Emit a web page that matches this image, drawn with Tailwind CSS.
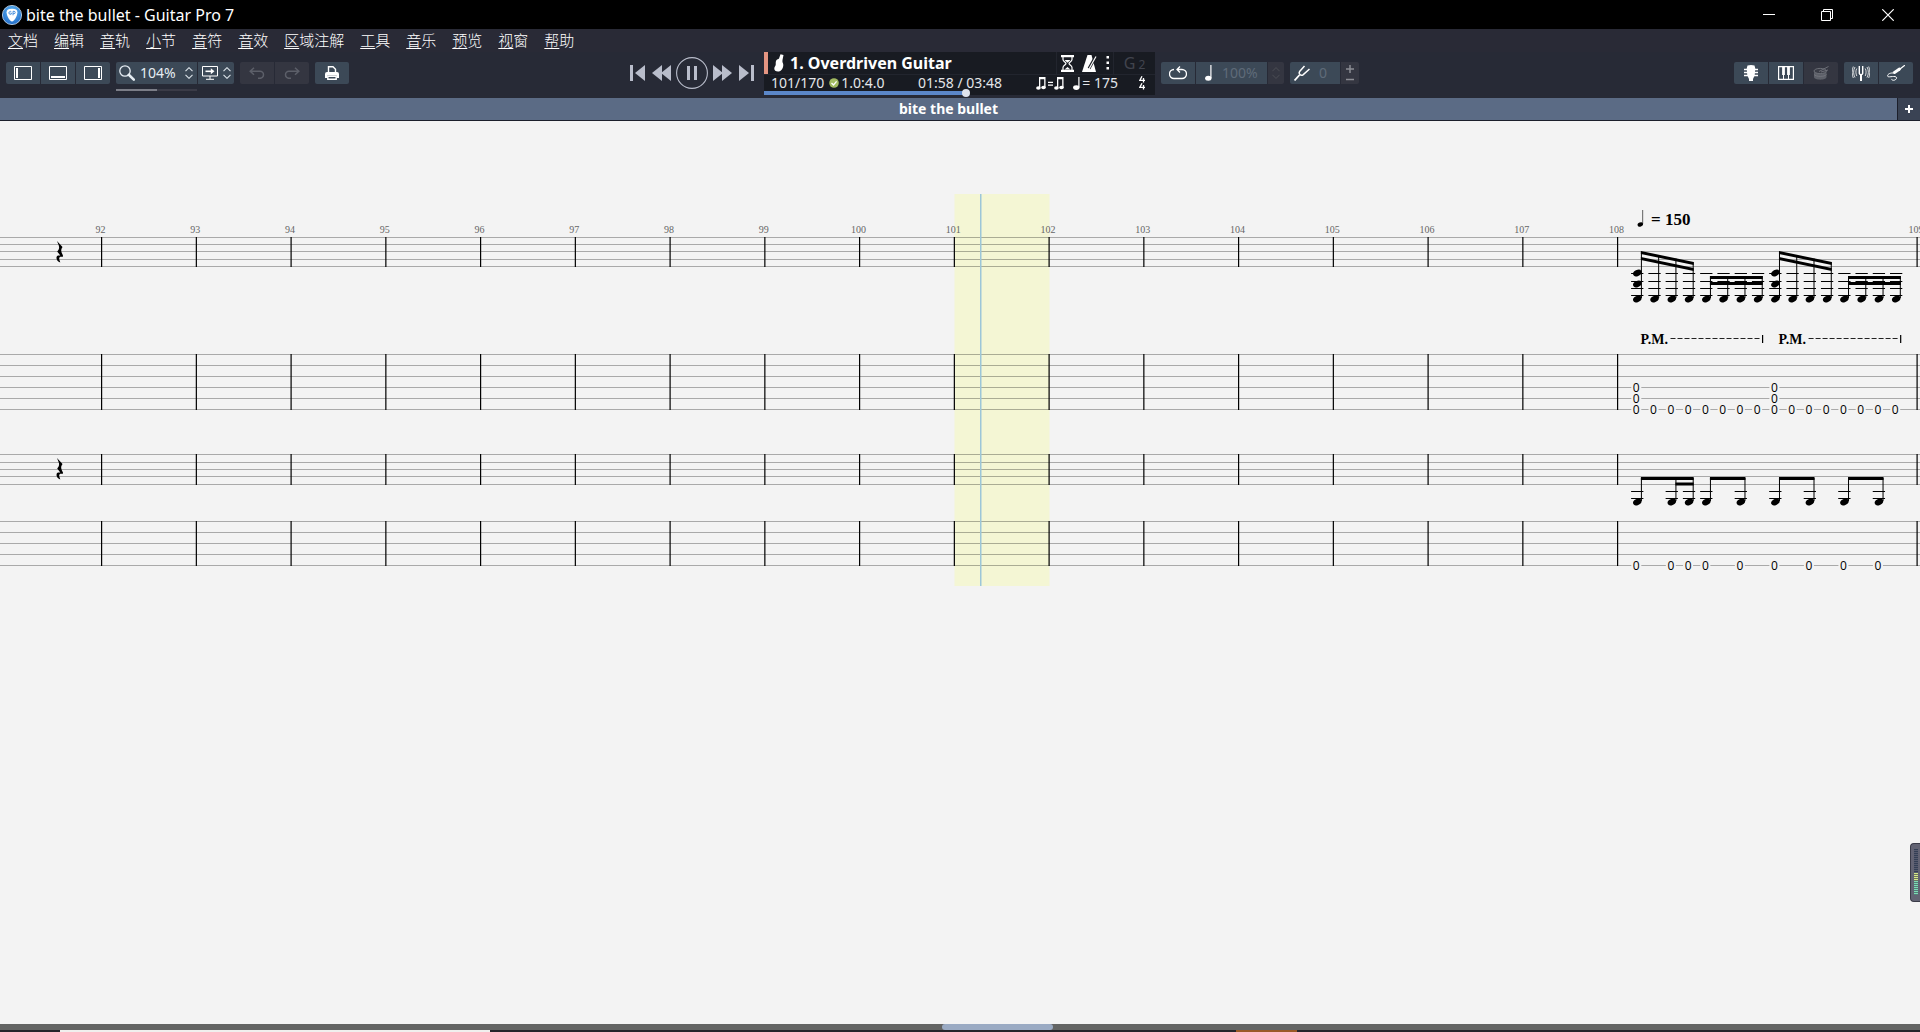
<!DOCTYPE html>
<html lang="zh-CN">
<head>
<meta charset="utf-8">
<title>bite the bullet - Guitar Pro 7</title>
<script src="https://cdn.jsdelivr.net/npm/@tailwindcss/browser@4"></script>
</head>
<body class="flex h-screen flex-col overflow-hidden bg-[#f3f3f3] font-['Noto_Sans','Noto_Sans_CJK_SC',sans-serif] text-white">

<!-- Window title -->
<header class="flex h-[29px] shrink-0 items-center bg-black pl-[2px]">
  <svg class="h-5 w-5" viewBox="0 0 20 20"><defs><radialGradient id="lg" cx=".5" cy=".3" r=".8"><stop offset="0" stop-color="#5cb4f2"/><stop offset="1" stop-color="#1a63c4"/></radialGradient></defs><circle cx="10" cy="10" r="9.6" fill="url(#lg)" stroke="#cfe4f7" stroke-width=".8"/><path d="M10 3.8c3.4 0 5.4 1 5.4 3.4 0 3.400-3.300 9.300-5.400 9.300S4.600 10.600 4.600 7.200C4.600 4.800 6.600 3.800 10 3.800z" fill="#fff"/><path d="M9.300 6.700a1.500 1.500 0 1 0 0 2.400V8H8.400M11 10.300V6.300h1a1.200 1.200 0 0 1 0 2.400h-1" fill="none" stroke="#3a87d8" stroke-width=".9"/></svg>
  <h1 class="ml-1 text-base leading-5">bite the bullet - Guitar Pro 7</h1>
  <div class="ml-auto flex h-full">
    <button aria-label="Minimize" class="flex w-[58px] items-center justify-center"><svg class="h-3 w-3" viewBox="0 0 12 12"><path d="M0 5.500h12" stroke="#fff"/></svg></button>
    <button aria-label="Restore" class="flex w-[58px] items-center justify-center"><svg class="h-3 w-3" viewBox="0 0 12 12" fill="none" stroke="#fff"><path d="M.5 2.500h9v9h-9zM2.500 2.500v-2h9v9h-2"/></svg></button>
    <button aria-label="Close" class="flex w-[64px] items-center justify-center"><svg class="h-3 w-3" viewBox="0 0 12 12"><path d="M.3.3l11.400 11.400M11.700.3L.3 11.700" stroke="#fff" stroke-width="1.200"/></svg></button>
  </div>
</header>

<!-- Menu bar -->
<nav class="flex h-[23px] shrink-0 items-center gap-4 bg-[#292a36] pb-[2px] pl-2 text-[15px] leading-5 font-light">
  <button><u class="underline-offset-2">文</u>档</button>
  <button><u class="underline-offset-2">编</u>辑</button>
  <button><u class="underline-offset-2">音</u>轨</button>
  <button><u class="underline-offset-2">小</u>节</button>
  <button><u class="underline-offset-2">音</u>符</button>
  <button><u class="underline-offset-2">音</u>效</button>
  <button><u class="underline-offset-2">区</u>域注解</button>
  <button><u class="underline-offset-2">工</u>具</button>
  <button><u class="underline-offset-2">音</u>乐</button>
  <button><u class="underline-offset-2">预</u>览</button>
  <button><u class="underline-offset-2">视</u>窗</button>
  <button><u class="underline-offset-2">帮</u>助</button>
</nav>

<!-- Toolbar -->
<div class="grid h-[46px] shrink-0 grid-cols-[1fr_auto_1fr] bg-[#272a36] pr-[7px] pl-[6px]">
  <div class="flex items-center justify-between pr-[10px] pb-1">
    <div class="flex gap-[6px]">
      <div class="flex gap-px overflow-hidden rounded-xs">
        <button aria-label="Left panel" class="flex h-[22px] w-[34px] items-center justify-center bg-[#3c4957]"><svg class="h-[14px] w-[18px]" viewBox="0 0 18 14" fill="none" stroke="#fff"><path d="M.5.5h17v13H.5z"/><path d="M3 2v10" stroke-width="2"/></svg></button>
        <button aria-label="Bottom panel" class="flex h-[22px] w-[34px] items-center justify-center bg-[#3c4957]"><svg class="h-[14px] w-[18px]" viewBox="0 0 18 14" fill="none" stroke="#fff"><path d="M.5.5h17v13H.5z"/><path d="M2 11h14" stroke-width="2"/></svg></button>
        <button aria-label="Right panel" class="flex h-[22px] w-[34px] items-center justify-center bg-[#3c4957]"><svg class="h-[14px] w-[18px]" viewBox="0 0 18 14" fill="none" stroke="#fff"><path d="M.5.5h17v13H.5z"/><path d="M15 2v10" stroke-width="2"/></svg></button>
      </div>
      <div class="relative flex gap-px">
        <label class="flex h-[22px] w-[81px] items-center rounded-l-xs bg-[#3c4957] pl-[3px]">
          <svg class="h-4 w-4 shrink-0" viewBox="0 0 16 16" fill="none" stroke="#e6edf3"><circle cx="6" cy="6" r="5.200" stroke-width="1.300"/><path d="M9.800 9.800l5 4.800" stroke-width="2.600" stroke-linecap="round"/></svg>
          <input aria-label="Zoom" value="104%" class="ml-[5px] w-[45px] bg-transparent text-sm leading-5 text-[#e6edf3] outline-none">
          <svg class="h-3 w-2 shrink-0" viewBox="0 0 8 12" fill="none" stroke="#dde4ea" stroke-width="1.100"><path d="M.5 4.200L4 .7l3.500 3.500M.5 7.800L4 11.300l3.500-3.500"/></svg>
        </label>
        <button aria-label="Display mode" class="flex h-[22px] w-9 items-center justify-center gap-[5px] rounded-r-xs bg-[#3c4957]">
          <svg class="h-[14px] w-4" viewBox="0 0 16 14" fill="none" stroke="#fff"><path d="M.5.5h15v9.500H.5zM8 10v3M4 13.300h8"/><path d="M3.500 5.300h6" stroke-width="1.600"/><path d="M8.800 2.300v6l3.700-3z" fill="#fff" stroke="none"/></svg>
          <svg class="h-3 w-2" viewBox="0 0 8 12" fill="none" stroke="#dde4ea" stroke-width="1.100"><path d="M.5 4.200L4 .7l3.500 3.500M.5 7.800L4 11.300l3.500-3.500"/></svg>
        </button>
        <div class="absolute top-[27px] left-0 h-[2px] w-[81px] bg-[#3a3b47]"><div class="h-full w-[41px] bg-[#7b7d87]"></div></div>
      </div>
      <div class="flex gap-px overflow-hidden rounded-xs">
        <button disabled aria-label="Undo" class="flex h-[22px] w-[34px] items-center justify-center bg-[#343641]"><svg class="h-3 w-4" viewBox="0 0 16 12" fill="none" stroke="#5c5f69" stroke-width="1.500"><path d="M5 .8L1.200 4.300 5 7.800M1.500 4.300H11a3.500 3.500 0 0 1 0 7H9"/></svg></button>
        <button disabled aria-label="Redo" class="flex h-[22px] w-[34px] items-center justify-center bg-[#343641]"><svg class="h-3 w-4" viewBox="0 0 16 12" fill="none" stroke="#5c5f69" stroke-width="1.500"><path d="M11 .8l3.800 3.500L11 7.800M14.500 4.300H5a3.500 3.500 0 0 0 0 7h2"/></svg></button>
      </div>
      <button aria-label="Print" class="flex h-[22px] w-[34px] items-center justify-center rounded-xs bg-[#3c4957]"><svg class="h-[14px] w-[14px]" viewBox="0 0 14 14"><path d="M3.500 7V.8h4.500L10.500 3.300V7" fill="none" stroke="#fff" stroke-width="1.400"/><path d="M0 8a2 2 0 0 1 2-2h10a2 2 0 0 1 2 2v4h-2.200V9.500H2.200V12H0z" fill="#fff"/><path d="M2.800 10.200h8.400v3.100H2.800z" fill="none" stroke="#fff" stroke-width="1.400"/></svg></button>
    </div>
    <div class="flex items-center text-[#b9bdcb]">
      <button aria-label="First bar"><svg class="h-4 w-[15px]" viewBox="0 0 15 16" fill="currentColor"><path d="M0 0h3v16H0zM15 0v16L5 8z"/></svg></button>
      <button aria-label="Rewind" class="ml-[7px]"><svg class="h-4 w-[19px]" viewBox="0 0 19 16" fill="currentColor"><path d="M10 0v16L0 8zM19 0v16L9 8z"/></svg></button>
      <button aria-label="Pause" class="ml-[5px]"><svg class="h-8 w-8" viewBox="0 0 32 32" fill="none" stroke="currentColor"><circle cx="16" cy="16" r="15.400" stroke-width="1.100"/><path d="M12.500 9v14M19.500 9v14" stroke-width="3"/></svg></button>
      <button aria-label="Fast forward" class="ml-[5px]"><svg class="h-4 w-[19px]" viewBox="0 0 19 16" fill="currentColor"><path d="M0 0v16l10-8zM9 0v16l10-8z"/></svg></button>
      <button aria-label="Last bar" class="ml-[7px]"><svg class="h-4 w-[15px]" viewBox="0 0 15 16" fill="currentColor"><path d="M12 0h3v16h-3zM0 0v16l10-8z"/></svg></button>
    </div>
  </div>

  <!-- Transport display -->
  <div class="relative flex h-[43px] w-[391px] flex-col bg-[#181b22]">
    <div class="flex h-[23px] items-center border-b border-[#22252e]">
      <div class="h-[22px] w-1 shrink-0 bg-[#e49582]"></div>
      <svg class="ml-[6px] h-[18px] w-[10px]" viewBox="0 0 10 18" fill="#fff"><path d="M6.500.3L9.500 1 8.800 4.500C8.500 6 8.300 7 8.500 8c.2 1 .8 1.500.8 3 0 3-1.800 6-4.500 6.400C2 17.700.2 16.500.3 14.500c.1-1.700 1.200-2.200 1.400-3.700C1.900 9.300 1.400 8.300 2.200 6.500 2.900 5 4.500 5.500 5 4.500z"/></svg>
      <span class="ml-[6px] text-base leading-5 font-bold">1. Overdriven Guitar</span>
      <div class="ml-auto flex h-full w-[58px] items-center justify-center gap-2 border-x border-[#22252e]">
        <svg class="h-[17px] w-[13px]" viewBox="0 0 13 17"><path d="M0 0h13v2.200H0zM0 14.800h13V17H0z" fill="#fff"/><path d="M2 2v2.500C2 6.500 5 7.300 5 8.500S2 10.500 2 12.500V15M11 2v2.500c0 2-3 2.800-3 4s3 2 3 4V15" fill="none" stroke="#fff" stroke-width="1.200"/><path d="M3.500 5h6L6.500 7.800zM3.500 14.500l3-2.500 3 2.500z" fill="#fff"/></svg>
        <svg class="h-[17px] w-4" viewBox="0 0 16 17"><path d="M5.500 0h4l4.500 17H0z" fill="#fff"/><path d="M7 13.500L13.800 1.500" stroke="#181b22" stroke-width="3"/><path d="M7 14L14 1.500" stroke="#fff" stroke-width="1.200"/></svg>
        <svg class="h-[14px] w-1" viewBox="0 0 4 14" fill="#fff"><path d="M.5 0h2.500v2.500H.5zM.5 5.500h2.500V8H.5zM.5 11h2.500v2.500H.5z"/></svg>
      </div>
      <div class="flex w-[41px] items-baseline justify-center gap-[3px] text-base leading-5 text-[#41444e]"><span>G</span><span class="text-xs">2</span></div>
    </div>
    <div class="flex h-4 items-center pl-[7px] text-sm leading-4 text-[#e4e6ea]">
      <div class="flex w-[147px] items-center">
        <span>101/170</span>
        <svg class="ml-[5px] h-[10px] w-[10px]" viewBox="0 0 10 10"><circle cx="5" cy="5" r="4.800" fill="#a3bb62"/><path d="M2.500 5l2 2L7.600 3.300" fill="none" stroke="#fff" stroke-width="1.300"/></svg>
        <span class="ml-[2px]">1.0:4.0</span>
      </div>
      <span>01:58 / 03:48</span>
      <div class="ml-auto flex items-center pr-[9px]">
        <svg class="h-[13px] w-7" viewBox="0 0 28 13" fill="#fff"><path d="M3 0h6.500v10.500h-1.300V2.200H4.300v9H3z"/><ellipse cx="2.400" cy="11" rx="2.300" ry="1.700"/><ellipse cx="7.500" cy="10.500" rx="2.300" ry="1.700"/><path d="M12 4.800h5v1.200h-5zM12 7.600h5v1.200h-5zM21 0h6.500v10.500h-1.300V2.200h-3.900v9H21z"/><ellipse cx="20.400" cy="11" rx="2.300" ry="1.700"/><ellipse cx="25.500" cy="10.500" rx="2.300" ry="1.700"/></svg>
        <svg class="ml-[9px] h-[13px] w-[7px]" viewBox="0 0 7 13" fill="#fff"><path d="M5.300 0H6.500v10.500H5.300z"/><ellipse cx="3.300" cy="10.600" rx="3.200" ry="2.300"/></svg>
        <span class="ml-[2px]">= 175</span>
        <svg class="ml-[21px] h-[14px] w-[7px]" viewBox="0 0 7 14" fill="none" stroke="#fff" stroke-width="1.300"><path d="M3 .3L.8 4.400H6M4.500 2v4.500M3 7.300L.8 11.400H6M4.500 9v4.500"/></svg>
      </div>
    </div>
    <div class="mt-auto flex h-1 items-center"><div class="h-full w-[202px] bg-[#5b87c9]"></div><div class="-ml-1 h-2 w-2 shrink-0 rounded-full bg-[#dfe4ee]"></div></div>
  </div>

  <div class="flex items-center justify-between pb-1 pl-[6px]">
    <div class="flex gap-[6px]">
      <div class="flex gap-px">
        <button aria-label="Loop" class="flex h-[22px] w-[34px] items-center justify-center rounded-l-xs bg-[#3c4957]"><svg class="h-[14px] w-[18px]" viewBox="0 0 18 14" fill="none" stroke="#fff" stroke-width="1.300"><path d="M5 3.500A4.300 4.300 0 0 0 5 12.500h8a4.300 4.300 0 0 0 0-9H8.500M11 .5L8 3.500l3 3"/></svg></button>
        <label class="flex h-[22px] w-[71px] items-center bg-[#3c4957] pl-[9px]">
          <svg class="h-4 w-[7px] shrink-0" viewBox="0 0 7 16" fill="#fff"><path d="M5.300 0h1.200v13H5.300z"/><ellipse cx="3.300" cy="13.200" rx="3.200" ry="2.500"/></svg>
          <input aria-label="Speed" disabled value="100%" class="ml-[10px] w-[40px] bg-transparent text-sm leading-5 text-[#5f6b79]">
        </label>
        <button disabled aria-label="Speed steps" class="flex h-[22px] w-4 items-center justify-center rounded-r-xs bg-[#343641]"><svg class="h-3 w-2" viewBox="0 0 8 12" fill="none" stroke="#45474f" stroke-width="1.100"><path d="M.5 4.200L4 .7l3.500 3.500M.5 7.800L4 11.300l3.500-3.500"/></svg></button>
      </div>
      <div class="flex gap-px">
        <label class="flex h-[22px] w-[50px] items-center rounded-l-xs bg-[#3c4957] pl-1">
          <svg class="h-4 w-4 shrink-0" viewBox="0 0 16 16" fill="none" stroke="#fff"><path d="M.5 15.500L5.500 10" stroke-width="1.800"/><path d="M10.500 1L5.600 6.500c-1.500 2 1.200 4.800 3.400 3.300L15.500 4" stroke-width="1.500"/></svg>
          <input aria-label="Transpose" disabled value="0" class="ml-[9px] w-4 bg-transparent text-sm leading-5 text-[#5f6b79]">
        </label>
        <button aria-label="Transpose steps" class="flex h-[22px] w-[18px] items-center justify-center rounded-r-xs bg-[#343641]"><svg class="h-4 w-2" viewBox="0 0 8 16" fill="none" stroke="#8b8d94" stroke-width="1.500"><path d="M0 4h8M4 0v8M0 14.500h8"/></svg></button>
      </div>
    </div>
    <div class="flex gap-[6px]">
      <div class="flex gap-px overflow-hidden rounded-xs">
        <button aria-label="Fretboard" class="flex h-[22px] w-[34px] items-center justify-center bg-[#3c4957]"><svg class="h-4 w-[14px]" viewBox="0 0 14 16"><path d="M3.500 0.500L7 0l3.500.5.8 3-.6 7L9 14v2H5v-2l-1.700-3.500-.6-7z" fill="#fff"/><path d="M0 4.500h14M0 7.500h14M0 10.500h14" stroke="#fff" stroke-width="1.300"/></svg></button>
        <button aria-label="Keyboard" class="flex h-[22px] w-[34px] items-center justify-center bg-[#3c4957]"><svg class="h-[14px] w-4" viewBox="0 0 16 14" fill="none" stroke="#fff"><path d="M.6.6h14.800v12.800H.6z" stroke-width="1.200"/><path d="M5.500 8v5.500M10.500 8v5.500"/><path d="M5.500 0v9M10.500 0v9" stroke-width="2.800"/></svg></button>
        <button disabled aria-label="Drums" class="flex h-[22px] w-[34px] items-center justify-center bg-[#343641]"><svg class="h-[14px] w-4" viewBox="0 0 16 14"><path d="M1 5v6c0 3.500 12.500 3.500 12.500 0V5z" fill="#5d6069"/><ellipse cx="7.200" cy="5" rx="6.200" ry="2.600" fill="#3b3d47" stroke="#6b6e76"/><path d="M6 5.500L15.500.5M8 6l7-2M1 8.500c2 2.500 10.500 2.500 12.500 0" fill="none" stroke="#74767e" stroke-width=".9"/></svg></button>
      </div>
      <div class="flex gap-px overflow-hidden rounded-xs">
        <button aria-label="Tuner" class="flex h-[22px] w-[34px] items-center justify-center bg-[#3c4957]"><svg class="h-4 w-[18px]" viewBox="0 0 18 16" fill="none" stroke="#fff"><path d="M7.300 1v7.500c0 1.500 3.400 1.500 3.400 0V1" stroke-width="1.400"/><path d="M9 10v6" stroke-width="2"/><path d="M4.800 3.500c-1.200 2-1.200 5 0 7.500M3 2C1.200 5 1.200 9.500 3 12.500M1.300 1.500C-.2 5-.2 9.500 1.300 13M13.200 3.500c1.200 2 1.200 5 0 7.500M15 2c1.800 3 1.800 7.500 0 10.500M16.700 1.500c1.500 3.500 1.500 8 0 11.500" stroke-width=".8"/></svg></button>
        <button aria-label="Line-in" class="flex h-[22px] w-[34px] items-center justify-center bg-[#3c4957]"><svg class="h-4 w-[18px]" viewBox="0 0 18 16" fill="none" stroke="#fff" stroke-linecap="round"><path d="M17.500.5L13 4" stroke-width="1.200"/><path d="M12.500 4L7.500 7.500" stroke-width="2.800"/><path d="M7 8C3.500 7.500.5 9 .6 11c.2 2 6-.5 8.500 1 1.500 1-.5 3.300-2.600 3.300-1.700 0-2-1-2-1" stroke-width="1"/></svg></button>
      </div>
    </div>
  </div>
</div>

<!-- Document tabs -->
<div class="flex h-[23px] shrink-0 gap-px border-b border-[#1c1f2b] bg-[#1c1f2b]">
  <button class="grow bg-[#5b6b85] text-center text-sm leading-[22px] font-bold">bite the bullet</button>
  <button aria-label="New tab" class="flex w-[22px] items-center justify-center bg-[#3a4354]"><svg class="h-2 w-2" viewBox="0 0 8 8"><path d="M0 4h8M4 0v8" stroke="#fff" stroke-width="2"/></svg></button>
</div>

<!-- Score -->
<main class="relative min-h-0 grow overflow-hidden">
  <svg class="block h-full w-full" role="img" aria-label="Score, bars 92 to 109"><g id="score" transform="translate(0 -121)"></g></svg>
  <aside aria-label="Output level" class="absolute right-0 bottom-[122px] flex h-[59px] w-[10px] flex-col rounded-l-sm border border-r-0 border-[#3a3b48] bg-[#626373] py-[5px] pr-[2px] pl-[3px]">
    <div class="h-6 bg-[repeating-linear-gradient(#343f55_0_1px,#555a6d_1px_2px)]"></div>
    <div class="h-[8px] bg-[repeating-linear-gradient(#d5e88a_0_1px,#6d765f_1px_2px)]"></div>
    <div class="h-[14px] bg-[repeating-linear-gradient(#7cdcb4_0_1px,#557a78_1px_2px)]"></div>
  </aside>
</main>

<!-- Horizontal scroll bar and the strip of desktop taskbar below it -->
<div class="h-[6px] shrink-0 bg-[#636463] pl-[49.06%]"><div class="h-full w-[111px] rounded-full bg-[#9aaac3]"></div></div>
<div class="flex h-[2px] shrink-0 bg-[#25262b] pl-[60px]"><div class="w-[430px] bg-[#f0f0ee]"></div><div class="ml-[746px] w-[61px] bg-[#9a5a26]"></div></div>

<script>
const score = document.getElementById('score');
const NS = 'http://www.w3.org/2000/svg';
function add(tag, attrs, text) {
  const e = document.createElementNS(NS, tag);
  for (const k in attrs) e.setAttribute(k, attrs[k]);
  if (text !== undefined) e.textContent = text;
  score.appendChild(e);
}
const rect = (x, y, width, height, fill = '#000') => add('rect', {x, y, width, height, fill});
const SERIF = '"Liberation Serif", serif';
const SANS = '"Open Sans", sans-serif';

// current bar
rect(954.5, 194, 95, 392, '#f4f6d4');

// staves and tablature
const systems = [[237, 244, 251, 259, 266], [354, 365, 376, 387, 398, 409], [454, 462, 469, 476, 484], [521, 532, 543, 554, 565]];
for (const lines of systems) {
  for (const y of lines) rect(0, y, '100%', 1, 'rgba(0,0,0,.3)');
}
const bars = Array.from({length: 17}, (_, i) => 101 + 94.75 * i).concat(1916.5);
bars.forEach((x, i) => {
  for (const l of systems) rect(x, l[0], 1.2, l[l.length - 1] - l[0] + 1);
  add('text', {x: x - .5, y: 233, 'text-anchor': 'middle', 'font-family': SERIF, 'font-size': 10, fill: '#666'}, 92 + i);
});

// playback cursor
rect(980, 194, 1.5, 392, '#9cc6d8');

// quarter rests
for (const y of [241, 458]) {
  add('path', {transform: `translate(56 ${y})`, d: 'M1 0L6.500 6C4.800 8.500 4.600 10 7 14.500L6.600 16C4.500 15.300 3.200 16 3.200 17.500 3.200 19 4 20.300 4.300 21.500 1.500 20.500 0 18 .6 16 1 14.500 2.500 14.300 4.300 14.600L1.200 10.500C3.500 8 3.600 6 2.200 3Z'});
}

const ledger = (x, ys) => ys.forEach(y => rect(x - 6.2, y, 12.3, 1));
const head = (x, y) => add('ellipse', {cx: x, cy: y, rx: 4.5, ry: 3, transform: `rotate(-28 ${x} ${y})`});
const stem = (x, y1, y2) => rect(x + 3.6, y1, 1, y2 - y1);
const beam = (x1, y1, x2, y2) => add('path', {d: `M${x1 + 3.6} ${y1}L${x2 + 4.600} ${y2}v3L${x1 + 3.600} ${y1 + 3}z`});
const fret = (x, y) => {
  rect(x - 5, y - 5, 10, 11, '#f3f3f3');
  add('text', {x, y: y + 5, 'text-anchor': 'middle', 'font-family': SANS, 'font-size': 12, fill: '#000'}, '0');
};

// guitar, bar 108
const step = 17.26, x0 = 1637.3;
for (let i = 0; i < 16; i++) {
  const x = x0 + step * i, k = i % 8;
  ledger(x, [273, 281, 288, 295]);
  head(x, 299);
  stem(x, k < 4 ? 251.5 + k * 3.5 : 276, 298);
  if (k === 0) { head(x, 273); head(x, 284); fret(x - 1, 387); fret(x - 1, 398); }
  fret(x - 1, 409);
}
for (const g of [0, 8]) {
  const at = n => x0 + step * (g + n);
  beam(at(0), 251, at(3), 262);
  beam(at(0), 257, at(3), 268);
  beam(at(4), 276, at(7), 276);
  beam(at(4), 282, at(7), 282);
  const px = 1640.500 + g * step;
  add('text', {x: px, y: 344, 'font-family': SERIF, 'font-size': 14, 'font-weight': 700}, 'P.M.');
  add('path', {d: `M${px + 30} 338.500h91`, stroke: '#222', 'stroke-dasharray': '5 2'});
  rect(px + 121.500, 335, 1.200, 8);
}

// tempo mark
rect(1642.500, 210, .6, 14);
add('ellipse', {cx: 1640.300, cy: 224.500, rx: 2.800, ry: 2, transform: 'rotate(-20 1640.3 224.5)'});
add('text', {x: 1651, y: 225, 'font-family': SERIF, 'font-size': 17, 'font-weight': 700}, '= 150');

// bass, bar 108
for (const n of [0, 2, 3, 4, 6, 8, 10, 12, 14]) {
  const x = x0 + step * n;
  ledger(x, [491, 498]);
  head(x, 502);
  stem(x, 478, 501);
  fret(x - 1, 565);
}
for (const [a, b] of [[0, 3], [4, 6], [8, 10], [12, 14]]) beam(x0 + step * a, 477, x0 + step * b, 477);
beam(x0 + step * 2, 482.500, x0 + step * 3, 482.500);
</script>
</body>
</html>
